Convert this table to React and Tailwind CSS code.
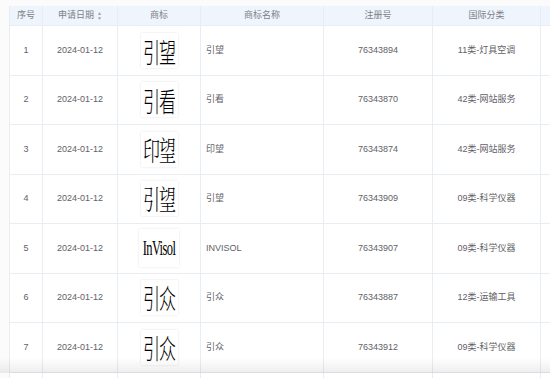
import React from 'react';

const rows = [
  { no: 1, date: '2024-01-12', logo: '引望', style: 'sans', name: '引望', reg: '76343894', cls: '11类-灯具空调' },
  { no: 2, date: '2024-01-12', logo: '引看', style: 'sans', name: '引看', reg: '76343870', cls: '42类-网站服务' },
  { no: 3, date: '2024-01-12', logo: '印望', style: 'serif', name: '印望', reg: '76343874', cls: '42类-网站服务' },
  { no: 4, date: '2024-01-12', logo: '引望', style: 'serif', name: '引望', reg: '76343909', cls: '09类-科学仪器' },
  { no: 5, date: '2024-01-12', logo: 'InVisol', style: 'latin', name: 'INVISOL', reg: '76343907', cls: '09类-科学仪器' },
  { no: 6, date: '2024-01-12', logo: '引众', style: 'sans', name: '引众', reg: '76343887', cls: '12类-运输工具' },
  { no: 7, date: '2024-01-12', logo: '引众', style: 'sans', name: '引众', reg: '76343912', cls: '09类-科学仪器' },
];

const Logo = ({ text, style }) => {
  if (style === 'latin') {
    return (
      <div className="w-[40px] h-[38px] bg-white shadow-[0_0_2px_rgba(0,0,0,0.12)] flex items-center justify-center">
        <span className="text-[12.5px] leading-[12px] text-black scale-y-[1.7] tracking-[-0.6px] [font-family:'Liberation_Serif',serif]">{text}</span>
      </div>
    );
  }
  const font = style === 'serif'
    ? "[font-family:'Noto_Serif_CJK_SC','Noto_Sans_CJK_SC',serif] font-light"
    : "[font-family:'Noto_Sans_CJK_SC',sans-serif] font-light";
  return (
    <div className="w-[37px] h-[35px] bg-white shadow-[0_0_2px_rgba(0,0,0,0.12)] flex items-center justify-center">
      <span className={`text-[17px] leading-[17px] text-black scale-y-[1.6] tracking-[-1px] ${font}`}>{text}</span>
    </div>
  );
};

const cell = 'border-r border-b border-[#e8edf3] flex items-center shrink-0';

export default function App() {
  return (
    <div className="relative w-[550px] h-[378px] bg-[#fbfbfb] overflow-hidden [font-family:'Liberation_Sans','Noto_Sans_CJK_SC',sans-serif] text-[9px]">
      <div className="absolute left-[9px] top-[6px] w-[640px] bg-white border-l border-[#e8edf3]">
        {/* Header */}
        <div className="flex h-[20px] bg-[#eef5fc] text-[#7c8088]">
          <div className={`${cell} w-[33px] justify-center`}>序号</div>
          <div className={`${cell} w-[75px] justify-center gap-[3px]`}>
            申请日期
            <span className="flex flex-col leading-none text-[5px] text-[#a0a4ab]">
              <span>▲</span>
              <span>▼</span>
            </span>
          </div>
          <div className={`${cell} w-[83px] justify-center`}>商标</div>
          <div className={`${cell} w-[123px] justify-center`}>商标名称</div>
          <div className={`${cell} w-[109px] justify-center`}>注册号</div>
          <div className={`${cell} w-[108px] justify-center`}>国际分类</div>
          <div className={`${cell} w-[100px]`}></div>
        </div>
        {/* Body */}
        {rows.map((r) => (
          <div key={r.no} className="flex h-[49.5px] text-[#5f6166]">
            <div className={`${cell} w-[33px] justify-center`}>{r.no}</div>
            <div className={`${cell} w-[75px] justify-center`}>{r.date}</div>
            <div className={`${cell} w-[83px] justify-center`}>
              <Logo text={r.logo} style={r.style} />
            </div>
            <div className={`${cell} w-[123px] pl-[5px]`}>{r.name}</div>
            <div className={`${cell} w-[109px] justify-center`}>{r.reg}</div>
            <div className={`${cell} w-[108px] justify-center`}>{r.cls}</div>
            <div className={`${cell} w-[100px]`}></div>
          </div>
        ))}
        <div className="flex h-[20px]">
          <div className={`${cell} w-[33px]`}></div>
          <div className={`${cell} w-[75px]`}></div>
          <div className={`${cell} w-[83px]`}></div>
          <div className={`${cell} w-[123px]`}></div>
          <div className={`${cell} w-[109px]`}></div>
          <div className={`${cell} w-[108px]`}></div>
          <div className={`${cell} w-[100px]`}></div>
        </div>
      </div>
      <div className="absolute left-0 right-0 top-[358px] h-[15px] bg-gradient-to-b from-transparent to-[rgba(0,0,0,0.07)]"></div>
    </div>
  );
}
